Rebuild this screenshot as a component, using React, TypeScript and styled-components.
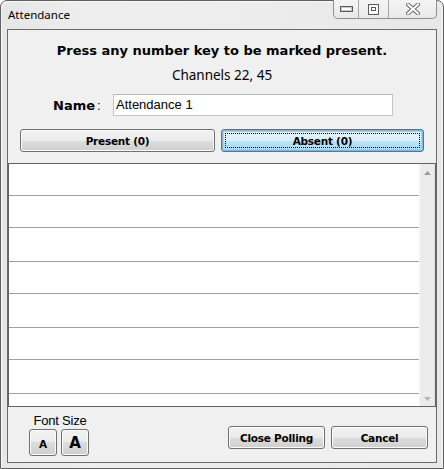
import React from "react";
import styled, { createGlobalStyle } from "styled-components";

const Global = createGlobalStyle`
  html, body { margin: 0; padding: 0; background: #ffffff; }
  body { width: 444px; height: 469px; overflow: hidden; }
  * { box-sizing: border-box; }
`;

const Window = styled.div`
  width: 444px;
  height: 469px;
  border: 1px solid #5f5f5f;
  border-radius: 7px 7px 0 0;
  background: linear-gradient(90deg, #e6e6e6 0%, #eeeeee 20%, #ececec 60%, #e8e8e8 100%);
  box-shadow: inset 1px 1px 0 #f8f8f8, inset -1px 0 0 #f4f4f4;
  display: flex;
  flex-direction: column;
`;

const TitleBar = styled.div`
  height: 28px;
  display: flex;
  justify-content: space-between;
  align-items: flex-start;
  padding: 0 6px 0 7px;
`;

const Title = styled.div`
  font-family: "Noto Sans", sans-serif;
  font-size: 11.5px;
  color: #000;
  line-height: 16px;
  margin-top: 6px;
`;

const CaptionGroup = styled.div`
  display: flex;
  height: 19px;
  margin-top: -1px;
  border: 1px solid #8e8e8e;
  border-top: none;
  border-radius: 0 0 5px 5px;
  background: linear-gradient(#f4f4f4, #e9e9e9);
  overflow: hidden;
`;

const CaptionBtn = styled.div<{ $w: number; $last?: boolean }>`
  width: ${(p) => p.$w}px;
  height: 100%;
  display: flex;
  align-items: center;
  justify-content: center;
  border-right: ${(p) => (p.$last ? "none" : "1px solid #a5a5a5")};
`;

const Client = styled.div`
  flex: 1;
  margin: 0 6px 5px 6px;
  border: 1px solid #6a6a6a;
  background: #f0f0f0;
  display: flex;
  flex-direction: column;
`;

const Heading = styled.div`
  margin-top: 13px;
  text-align: center;
  font-family: "DejaVu Sans", sans-serif;
  font-weight: bold;
  font-size: 13px;
  line-height: 16px;
  color: #000;
`;

const Channels = styled.div`
  margin-top: 7px;
  text-align: center;
  font-family: "Noto Sans", sans-serif;
  font-size: 13.5px;
  line-height: 18px;
  color: #000;
`;

const NameRow = styled.div`
  margin-top: 10px;
  display: flex;
  align-items: center;
  padding-left: 45px;
  height: 22px;
`;

const NameLabel = styled.div`
  width: 60px;
  font-family: "DejaVu Sans", sans-serif;
  font-size: 13px;
  color: #000;
  b { font-weight: bold; }
  span { font-family: "Liberation Sans", sans-serif; margin-left: 2px; }
`;

const NameInput = styled.div`
  width: 280px;
  height: 22px;
  border: 1px solid #c5c5c5;
  border-top-color: #b5b5b5;
  background: #fff;
  font-family: "Liberation Sans", sans-serif;
  font-size: 13px;
  line-height: 20px;
  padding-left: 2px;
  color: #000;
`;

const ToggleRow = styled.div`
  margin-top: 13px;
  display: flex;
  gap: 6px;
  padding: 0 11px 0 12px;
`;

const baseBtn = `
  font-family: "DejaVu Sans", sans-serif;
  font-weight: bold;
  font-size: 10.5px;
  letter-spacing: -0.25px;
  color: #000;
  display: flex;
  align-items: center;
  justify-content: center;
  border-radius: 3px;
`;

const GrayButton = styled.div<{ $w: number; $h: number }>`
  ${baseBtn}
  width: ${(p) => p.$w}px;
  height: ${(p) => p.$h}px;
  border: 1px solid #707070;
  box-shadow: inset 0 0 0 1px #fbfbfb;
  background: linear-gradient(#f2f2f2 0%, #ebebeb 50%, #dddddd 50%, #cfcfcf 100%);
`;

const BlueButton = styled.div<{ $w: number; $h: number }>`
  ${baseBtn}
  width: ${(p) => p.$w}px;
  height: ${(p) => p.$h}px;
  border: 1px solid #3c7fb1;
  box-shadow: inset 0 0 0 1px #82b4d6, inset 0 0 0 2px #a9d2ea;
  background: linear-gradient(#e5f4fc 0%, #d8eef9 50%, #bee5f7 50%, #a7d9f5 100%);
  padding: 3px;
`;

const FocusRect = styled.div`
  width: 100%;
  height: 100%;
  border: 1px dotted #000;
  display: flex;
  align-items: center;
  justify-content: center;
`;

const List = styled.div`
  margin-top: 11px;
  height: 244px;
  border: 1px solid #646464;
  background: #fff;
  display: flex;
`;

const Rows = styled.div`
  flex: 1;
  display: flex;
  flex-direction: column;
`;

const Row = styled.div<{ $h: number }>`
  height: ${(p) => p.$h}px;
  border-bottom: 1px solid #a0a0a0;
`;

const ScrollBar = styled.div`
  width: 16px;
  background: #ececec;
  border-left: 1px solid #f6f6f6;
  box-shadow: inset -1px 0 0 #e2e2e2;
  display: flex;
  flex-direction: column;
  justify-content: space-between;
  align-items: center;
  padding: 7px 0 5px 0;
`;

const Footer = styled.div`
  flex: 1;
  display: flex;
  justify-content: space-between;
  padding: 6px 8px 0 21px;
`;

const FontGroup = styled.div`
  display: flex;
  flex-direction: column;
  align-items: center;
`;

const FontLabel = styled.div`
  font-family: "Liberation Sans", sans-serif;
  font-size: 13px;
  letter-spacing: -0.2px;
  line-height: 15px;
  color: #000;
  margin-left: 2px;
`;

const FontBtns = styled.div`
  display: flex;
  gap: 4px;
  margin-top: 1px;
`;

const FontBtn = styled.div<{ $size: number; $drop: number }>`
  width: 28px;
  height: 27px;
  border: 1px solid #707070;
  border-radius: 3px;
  box-shadow: inset 0 0 0 1px #fbfbfb;
  background: linear-gradient(#f2f2f2 0%, #ebebeb 50%, #dddddd 50%, #cfcfcf 100%);
  font-family: "DejaVu Sans", sans-serif;
  font-weight: bold;
  font-size: ${(p) => p.$size}px;
  color: #000;
  display: flex;
  align-items: center;
  justify-content: center;
  padding-top: ${(p) => p.$drop}px;
`;

const ActionBtns = styled.div`
  display: flex;
  gap: 6px;
  margin-top: 13px;
`;

const rowHeights = [32, 32, 34, 32, 34, 32, 34];

export default function App() {
  return (
    <>
      <Global />
      <Window>
        <TitleBar>
          <Title>Attendance</Title>
          <CaptionGroup>
            <CaptionBtn $w={25}>
              <svg width="13" height="6" viewBox="0 0 13 6">
                <rect x="0.5" y="0.5" width="12" height="5" fill="#ffffff" stroke="#5a5a5a" />
                <rect x="1.5" y="1.5" width="10" height="3" fill="none" stroke="#c8c8c8" />
              </svg>
            </CaptionBtn>
            <CaptionBtn $w={30}>
              <svg width="11" height="11" viewBox="0 0 11 11">
                <rect x="0.5" y="0.5" width="10" height="10" fill="#ffffff" stroke="#5a5a5a" />
                <rect x="3.5" y="3.5" width="4" height="3" fill="#ffffff" stroke="#5a5a5a" />
              </svg>
            </CaptionBtn>
            <CaptionBtn $w={47} $last>
              <svg width="14" height="12" viewBox="0 0 14 12">
                <path d="M2 1.5 L12 10.5 M12 1.5 L2 10.5" stroke="#6a6a6a" strokeWidth="4" strokeLinecap="square" />
                <path d="M2 1.5 L12 10.5 M12 1.5 L2 10.5" stroke="#ffffff" strokeWidth="2" strokeLinecap="square" />
              </svg>
            </CaptionBtn>
          </CaptionGroup>
        </TitleBar>
        <Client>
          <Heading>Press any number key to be marked present.</Heading>
          <Channels>Channels 22, 45</Channels>
          <NameRow>
            <NameLabel>
              <b>Name</b>
              <span>:</span>
            </NameLabel>
            <NameInput>Attendance 1</NameInput>
          </NameRow>
          <ToggleRow>
            <GrayButton $w={195} $h={23}>Present (0)</GrayButton>
            <BlueButton $w={203} $h={23}>
              <FocusRect>Absent (0)</FocusRect>
            </BlueButton>
          </ToggleRow>
          <List>
            <Rows>
              {rowHeights.map((h, i) => (
                <Row key={i} $h={h} />
              ))}
            </Rows>
            <ScrollBar>
              <svg width="7" height="4" viewBox="0 0 7 4">
                <path d="M0 4 L3.5 0 L7 4 Z" fill="#9c9c9c" />
              </svg>
              <svg width="7" height="4" viewBox="0 0 7 4">
                <path d="M0 0 L3.5 4 L7 0 Z" fill="#b4b4b4" />
              </svg>
            </ScrollBar>
          </List>
          <Footer>
            <FontGroup>
              <FontLabel>Font Size</FontLabel>
              <FontBtns>
                <FontBtn $size={10.5} $drop={3}>A</FontBtn>
                <FontBtn $size={15} $drop={1}>A</FontBtn>
              </FontBtns>
            </FontGroup>
            <ActionBtns>
              <GrayButton $w={97} $h={23}>Close Polling</GrayButton>
              <GrayButton $w={97} $h={23}>Cancel</GrayButton>
            </ActionBtns>
          </Footer>
        </Client>
      </Window>
    </>
  );
}
